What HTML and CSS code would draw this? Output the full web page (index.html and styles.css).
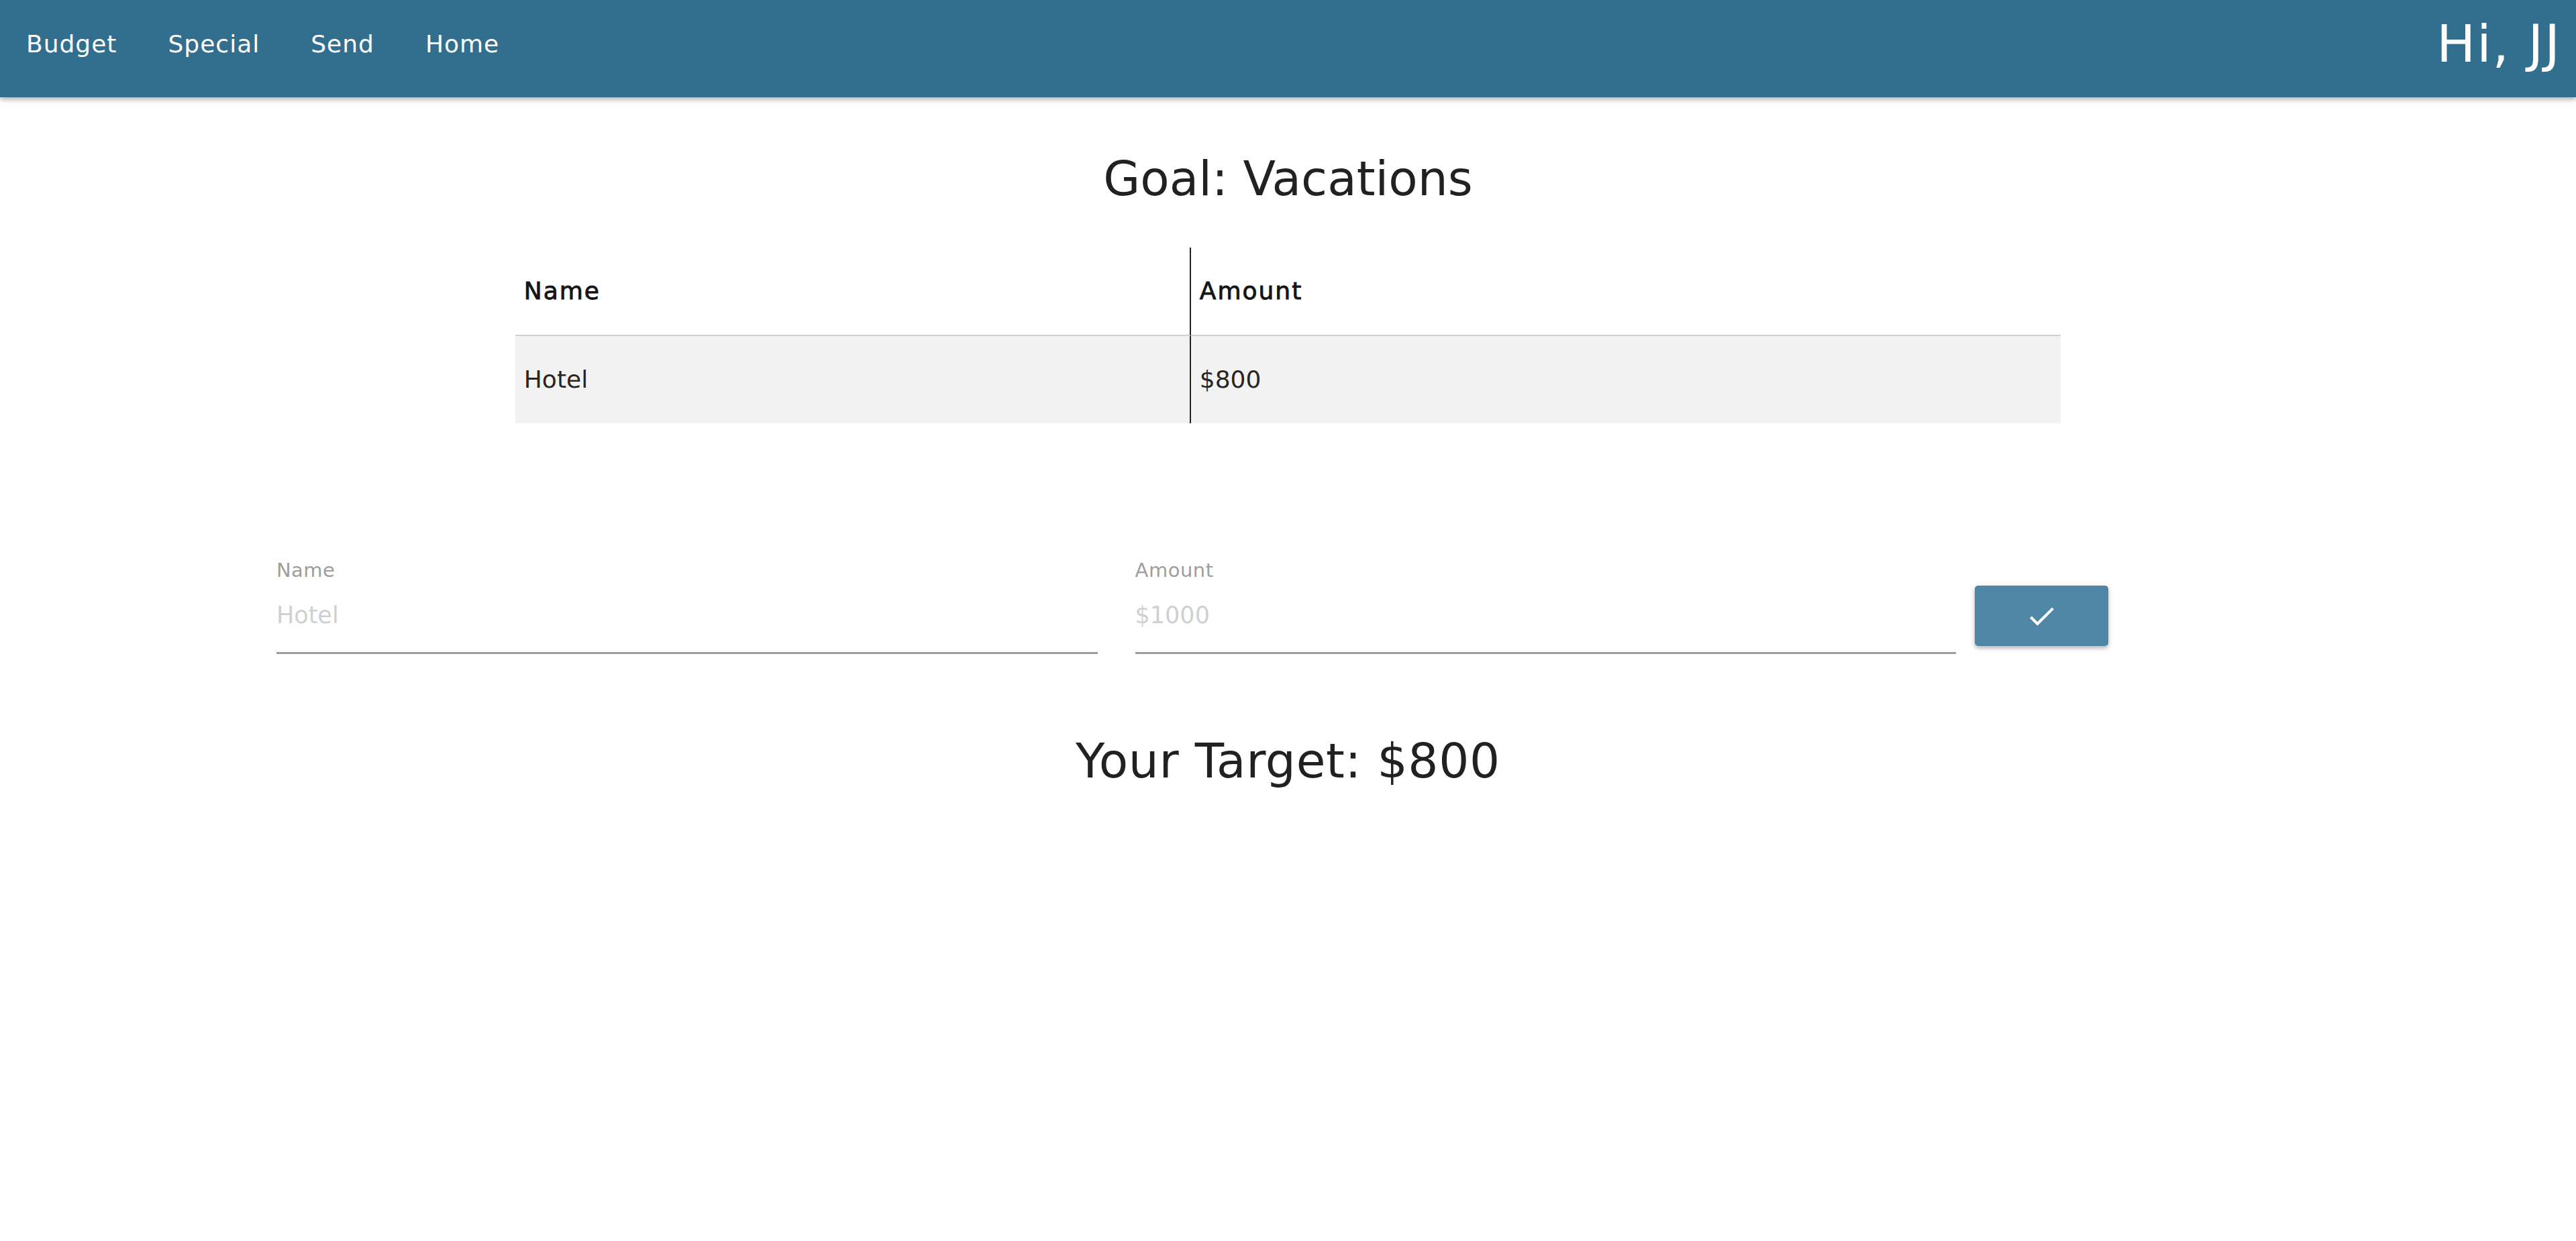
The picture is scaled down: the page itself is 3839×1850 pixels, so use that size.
FILE: index.html
```html
<!DOCTYPE html>
<html lang="en">
<head>
<meta charset="utf-8">
<title>Goal: Vacations</title>
<link rel="stylesheet" href="styles.css">
</head>
<body>
<nav class="navbar">
  <ul class="nav-links">
    <li><a href="#">Budget</a></li>
    <li><a href="#">Special</a></li>
    <li><a href="#">Send</a></li>
    <li><a href="#">Home</a></li>
  </ul>
  <span class="greeting">Hi, JJ</span>
</nav>
<main class="content">
  <h1 class="page-title">Goal: Vacations</h1>
  <table class="items">
    <thead>
      <tr><th class="col-name">Name</th><th>Amount</th></tr>
    </thead>
    <tbody>
      <tr><td class="col-name">Hotel</td><td>$800</td></tr>
    </tbody>
  </table>
  <form class="add-form">
    <div class="field">
      <label for="item-name">Name</label>
      <input id="item-name" type="text" placeholder="Hotel">
    </div>
    <div class="field">
      <label for="item-amount">Amount</label>
      <input id="item-amount" type="text" placeholder="$1000">
    </div>
    <div class="actions">
      <button type="button" class="submit-btn" aria-label="Add">
        <svg class="check" viewBox="0 0 24 24"><path d="M9 16.17L4.83 12l-1.42 1.41L9 19 21 7l-1.41-1.41z" fill="#ffffff"/></svg>
      </button>
    </div>
  </form>
  <h2 class="target">Your Target: $800</h2>
</main>
</body>
</html>
```

FILE: styles.css
```css
html, body {
  margin: 0;
  padding: 0;
  background: #ffffff;
}

body {
  font-family: "DejaVu Sans", "Liberation Sans", sans-serif;
  color: #212121;
}

.navbar {
  position: relative;
  z-index: 2;
  height: 145px;
  box-sizing: border-box;
  padding-bottom: 14px;
  background: #326f8e;
  display: flex;
  align-items: center;
  justify-content: space-between;
  box-shadow: 0 4px 5px 0 rgba(0, 0, 0, 0.14), 0 2px 11px 0 rgba(0, 0, 0, 0.2);
}

.nav-links {
  list-style: none;
  margin: 0;
  padding: 0 0 0 1px;
  display: flex;
}

.nav-links a {
  display: block;
  padding: 0 38px;
  color: #ffffff;
  text-decoration: none;
  font-size: 36px;
  line-height: 42px;
  letter-spacing: 1px;
}

.greeting {
  color: #ffffff;
  font-size: 77px;
  line-height: 90px;
  letter-spacing: 2px;
  padding-right: 22px;
}

.content {
  display: block;
}

.page-title {
  margin: 79px 0 60px;
  text-align: center;
  font-size: 71px;
  line-height: 85px;
  font-weight: 400;
  color: #212121;
}

.items {
  width: 60%;
  margin: 0 auto;
  border-spacing: 0;
  border-collapse: separate;
  table-layout: fixed;
}

.items th,
.items td {
  padding: 44px 13px;
  font-size: 36px;
  line-height: 42px;
  text-align: left;
  white-space: nowrap;
}

.items th {
  font-weight: 400;
  letter-spacing: 2px;
  -webkit-text-stroke: 0.9px #151515;
  color: #151515;
  border-bottom: 2px solid #d0d0d0;
}

.items td {
  font-weight: 400;
  color: #2a2420;
  background: #f2f2f2;
}

.items .col-name {
  width: 979px;
  border-right: 2px solid #222222;
}

.add-form {
  width: 80%;
  margin: 202px auto 0;
  display: grid;
  grid-template-columns: 5fr 5fr 2fr;
  align-items: start;
}

.field {
  padding: 0 28px;
}

.field label {
  display: block;
  font-size: 29px;
  line-height: 34px;
  letter-spacing: 0.5px;
  color: #9e9e9e;
}

.field input {
  display: block;
  width: 100%;
  height: 108px;
  box-sizing: border-box;
  margin: 0;
  padding: 0 0 5px;
  border: none;
  border-bottom: 3px solid #9e9e9e;
  background: transparent;
  outline: none;
  font-family: "DejaVu Sans", "Liberation Sans", sans-serif;
  font-size: 35px;
  color: #212121;
}

.field input::placeholder {
  color: #d0d0d0;
}

.actions {
  display: flex;
}

.submit-btn {
  margin-top: 40px;
  width: 199px;
  height: 90px;
  padding: 0;
  border: none;
  border-radius: 5px;
  background: #5086a5;
  display: flex;
  align-items: center;
  justify-content: center;
  cursor: pointer;
  box-shadow: 0 4px 5px 0 rgba(0, 0, 0, 0.14), 0 2px 9px 0 rgba(0, 0, 0, 0.18);
}

.check {
  width: 49px;
  height: 49px;
  display: block;
}

.target {
  margin: 117px 0 0;
  text-align: center;
  font-size: 71px;
  line-height: 85px;
  font-weight: 400;
  letter-spacing: 0.7px;
  color: #212121;
}
```
